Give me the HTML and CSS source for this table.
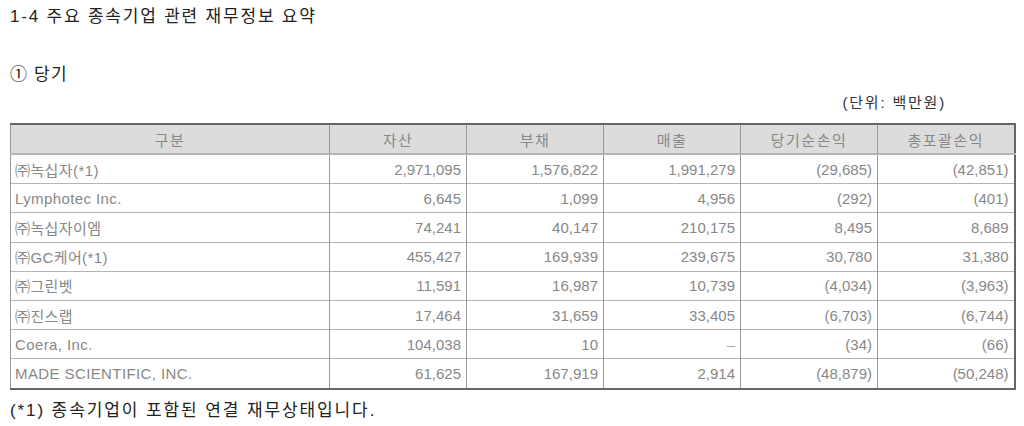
FILE: index.html
```html
<!DOCTYPE html>
<html lang="ko">
<head>
<meta charset="utf-8">
<link rel="stylesheet" href="styles.css">
</head>
<body>
<div class="page">
  <h1 class="title">1-4 주요 종속기업 관련 재무정보 요약</h1>
  <h2 class="sub">① 당기</h2>
  <div class="unit">(단위: 백만원)</div>
  <table class="fin">
    <colgroup>
      <col class="c-name"><col class="c-num"><col class="c-num"><col class="c-num"><col class="c-num"><col class="c-num">
    </colgroup>
    <thead>
      <tr><th>구분</th><th>자산</th><th>부채</th><th>매출</th><th>당기순손익</th><th>총포괄손익</th></tr>
    </thead>
    <tbody>
      <tr><td class="name">㈜녹십자(*1)</td><td>2,971,095</td><td>1,576,822</td><td>1,991,279</td><td>(29,685)</td><td>(42,851)</td></tr>
      <tr><td class="name">Lymphotec Inc.</td><td>6,645</td><td>1,099</td><td>4,956</td><td>(292)</td><td>(401)</td></tr>
      <tr><td class="name">㈜녹십자이엠</td><td>74,241</td><td>40,147</td><td>210,175</td><td>8,495</td><td>8,689</td></tr>
      <tr><td class="name">㈜GC케어(*1)</td><td>455,427</td><td>169,939</td><td>239,675</td><td>30,780</td><td>31,380</td></tr>
      <tr><td class="name">㈜그린벳</td><td>11,591</td><td>16,987</td><td>10,739</td><td>(4,034)</td><td>(3,963)</td></tr>
      <tr><td class="name">㈜진스랩</td><td>17,464</td><td>31,659</td><td>33,405</td><td>(6,703)</td><td>(6,744)</td></tr>
      <tr><td class="name">Coera, Inc.</td><td>104,038</td><td>10</td><td class="dash">–</td><td>(34)</td><td>(66)</td></tr>
      <tr><td class="name">MADE SCIENTIFIC, INC.</td><td>61,625</td><td>167,919</td><td>2,914</td><td>(48,879)</td><td>(50,248)</td></tr>
    </tbody>
  </table>
  <p class="note">(*1) 종속기업이 포함된 연결 재무상태입니다.</p>
</div>
</body>
</html>
```
FILE: styles.css
```css
html, body {
  margin: 0;
  padding: 0;
  background: #fff;
}
.page {
  padding: 7px 12px 0 10px;
  font-family: "Liberation Sans", "Noto Sans CJK KR", sans-serif;
  color: #222;
}
.title {
  margin: 0;
  font-size: 17px;
  font-weight: normal;
  letter-spacing: 1.8px;
  line-height: 20px;
}
.sub {
  margin: 38px 0 0;
  font-size: 17px;
  font-weight: normal;
  letter-spacing: 1.2px;
  line-height: 20px;
}
.unit {
  margin-top: 9px;
  text-align: right;
  padding-right: 66px;
  font-size: 15px;
  line-height: 18px;
  letter-spacing: 1.8px;
  color: #333;
}
.fin {
  margin-top: 11px;
  width: 1002px;
  border-collapse: collapse;
  table-layout: fixed;
  border: 2px solid #666;
  border-left-width: 1px;
  font-size: 15px;
  color: #888;
}
.c-name { width: 319px; }
.c-num { width: 137px; }
.fin th {
  height: 28px;
  padding: 0;
  background: #dcdcdc;
  font-weight: normal;
  text-align: center;
  letter-spacing: 1.5px;
  border-left: 1px solid #999;
  border-bottom: 2px solid #b4b4b4;
  color: #888;
}
.fin td {
  height: 28.2px;
  padding: 0 5px 0 4px;
  text-align: right;
  border-left: 1px solid #999;
  border-top: 1px solid #b4b4b4;
  white-space: nowrap;
}
.fin td.name {
  text-align: left;
  letter-spacing: 0.4px;
}
.fin td.dash {
  color: #aaa;
}
.note {
  margin: 11px 0 0;
  font-size: 17px;
  line-height: 20px;
  letter-spacing: 1.9px;
  color: #222;
}
```
